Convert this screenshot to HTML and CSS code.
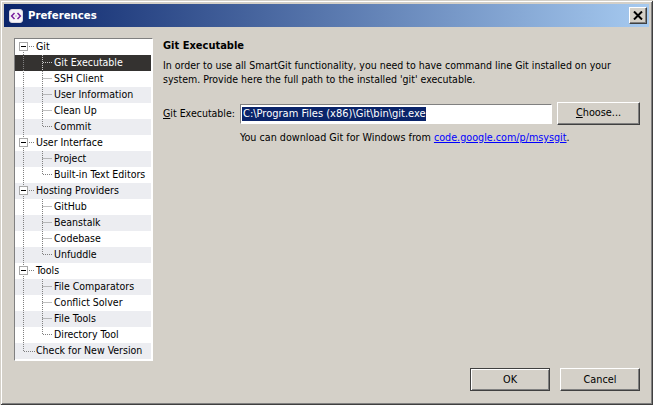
FILE: index.html
```html
<!DOCTYPE html>
<html lang="en">
<head>
<meta charset="utf-8">
<title>Preferences</title>
<link rel="stylesheet" href="styles.css">
</head>
<body>
<div class="dialog">
  <header class="titlebar">
    <svg class="app-icon" width="14" height="14" viewBox="0 0 14 14">
      <rect x="0.5" y="0.5" width="13" height="13" rx="2.5" fill="#f6f4f8" stroke="#dcd8e0"/>
      <path d="M5.5 4 2.6 7l2.9 3M8.5 4l2.9 3-2.9 3" fill="none" stroke="#7a1f9e" stroke-width="1.5"/>
      <path d="M6.2 7h1.6" stroke="#b58ac8" stroke-width="1"/>
    </svg>
    <span class="title-text">Preferences</span>
    <button class="close-btn" aria-label="Close">
      <svg width="10" height="9" viewBox="0 0 10 9"><path d="M1 0.5 9 8.5M9 0.5 1 8.5" stroke="#000" stroke-width="2" fill="none"/></svg>
    </button>
  </header>
  <div class="body">
    <nav class="tree">
      <svg class="tree-lines" width="137" height="320" viewBox="0 0 137 320">
        <g stroke="#808080" stroke-dasharray="1 1" fill="none">
          <path d="M8.5 13V312.5H20"/>
          <path d="M14 7.5H19"/>
          <path d="M14 103.5H19"/>
          <path d="M14 151.5H19"/>
          <path d="M14 231.5H19"/>
          <path d="M27.5 16V87.5H37M27.5 39.5H37M27.5 55.5H37M27.5 71.5H37"/>
          <path d="M27.5 112V135.5H37M27.5 119.5H37"/>
          <path d="M27.5 160V215.5H37M27.5 167.5H37M27.5 183.5H37M27.5 199.5H37"/>
          <path d="M27.5 240V295.5H37M27.5 247.5H37M27.5 263.5H37M27.5 279.5H37"/>
        </g>
        <path d="M27.5 16V32M28 23.5H37" stroke="#c8c8c8" stroke-dasharray="1 1" fill="none"/>
        <g fill="#fff" stroke="#a8a8a8">
          <rect x="4.5" y="3.5" width="8" height="8"/>
          <rect x="4.5" y="99.5" width="8" height="8"/>
          <rect x="4.5" y="147.5" width="8" height="8"/>
          <rect x="4.5" y="227.5" width="8" height="8"/>
        </g>
        <g stroke="#000">
          <path d="M6 7.5h5M6 103.5h5M6 151.5h5M6 231.5h5"/>
        </g>
      </svg>
      <div class="row root">Git</div>
      <div class="row child selected">Git Executable</div>
      <div class="row child">SSH Client</div>
      <div class="row child">User Information</div>
      <div class="row child">Clean Up</div>
      <div class="row child">Commit</div>
      <div class="row root">User Interface</div>
      <div class="row child">Project</div>
      <div class="row child">Built-in Text Editors</div>
      <div class="row root">Hosting Providers</div>
      <div class="row child">GitHub</div>
      <div class="row child">Beanstalk</div>
      <div class="row child">Codebase</div>
      <div class="row child">Unfuddle</div>
      <div class="row root">Tools</div>
      <div class="row child">File Comparators</div>
      <div class="row child">Conflict Solver</div>
      <div class="row child">File Tools</div>
      <div class="row child">Directory Tool</div>
      <div class="row root">Check for New Version</div>
    </nav>
    <main class="panel">
      <h1 class="panel-title">Git Executable</h1>
      <p class="panel-desc">In order to use all SmartGit functionality, you need to have command line Git installed on your system. Provide here the full path to the installed 'git' executable.</p>
      <div class="field-row">
        <label class="field-label"><u>G</u>it Executable:</label>
        <div class="text-input"><span class="selection">C:\Program Files (x86)\Git\bin\git.exe</span></div>
        <button class="btn choose"><u>C</u>hoose...</button>
      </div>
      <p class="hint">You can download Git for Windows from <a href="#">code.google.com/p/msysgit</a>.</p>
    </main>
  </div>
  <footer class="footer">
    <button class="btn ok">OK</button>
    <button class="btn cancel">Cancel</button>
  </footer>
</div>
</body>
</html>
```

FILE: styles.css
```css
* { box-sizing: border-box; }
html, body { margin: 0; padding: 0; }
body {
  width: 653px;
  height: 405px;
  overflow: hidden;
  font: 10.5px/14px "DejaVu Sans Condensed", "DejaVu Sans", sans-serif;
  font-stretch: condensed;
  color: #000;
}
.dialog {
  width: 653px;
  height: 405px;
  display: flex;
  flex-direction: column;
  background: #d4d0c8;
  padding: 4px;
  box-shadow: inset 1px 1px 0 #d4d0c8, inset -1px -1px 0 #404040, inset 2px 2px 0 #fff, inset -2px -2px 0 #808080;
}
.titlebar {
  height: 23px;
  flex: none;
  display: flex;
  align-items: center;
  padding: 0 2px 0 5px;
  background: linear-gradient(90deg, #0a246a, #a6caf0);
  color: #fff;
}
.app-icon { flex: none; }
.title-text { margin-left: 5px; font-weight: bold; font-size: 11.3px; flex: 1; }
.close-btn {
  width: 18px;
  height: 17px;
  padding: 0;
  display: flex;
  align-items: center;
  justify-content: center;
  background: #d4d0c8;
  border: 1px solid;
  border-color: #fff #404040 #404040 #fff;
  box-shadow: inset -1px -1px 0 #808080;
}
.body { display: flex; flex: none; padding: 11px 0 0 10px; }
.tree {
  position: relative;
  width: 139px;
  height: 323px;
  flex: none;
  background: #fff;
  border: 1px solid #fff;
  border-top-color: #808080;
  border-left-color: #808080;
  padding-right: 1px;
}
.tree-lines { position: absolute; left: 0; top: 0; z-index: 1; pointer-events: none; }
.row { height: 16px; line-height: 15px; white-space: nowrap; }
.row:nth-of-type(even) { background: #ecedf1; }
.root { padding-left: 21px; }
.child { padding-left: 39px; }
.row.selected { background: #343230; color: #fff; }
.panel { margin-left: 9px; width: 477px; padding-top: 0; }
.panel-title { margin: 1px 0 0 1px; font-size: 11px; line-height: 14px; font-weight: bold; }
.panel-desc { margin: 5px 0 0 1px; line-height: 14px; }
.field-row { display: flex; align-items: center; margin-top: 16px; height: 23px; }
.field-label { width: 78px; flex: none; padding: 0 0 2px 1px; }
.text-input {
  width: 312px;
  height: 20px;
  flex: none;
  background: #fff;
  border: 1px solid;
  border-color: #808080 #fff #fff #808080;
  padding: 1px;
  line-height: 14px;
}
.selection { display: inline-block; padding-left: 1px; font-size: 11px; background: #0a246a; color: #fff; }
.btn {
  font: inherit;
  font-size: 10.8px;
  font-stretch: inherit;
  color: #000;
  background: #d4d0c8;
  border: 1px solid;
  border-color: #fff #404040 #404040 #fff;
  box-shadow: inset -1px -1px 0 #808080;
  padding: 0;
}
.choose { width: 83px; height: 23px; margin-left: 5px; flex: none; padding-bottom: 1px; }
.hint { margin: 6px 0 0 78px; font-size: 10.7px; }
.hint a { color: #0000ff; }
.footer { margin-top: auto; display: flex; justify-content: flex-end; gap: 10px; padding: 0 9px 10px 0; }
.ok, .cancel { height: 23px; }
.ok { width: 80px; border: 1px solid #404040; box-shadow: inset 1px 1px 0 #fff, inset -1px -1px 0 #808080; }
.cancel { width: 80px; }
```
